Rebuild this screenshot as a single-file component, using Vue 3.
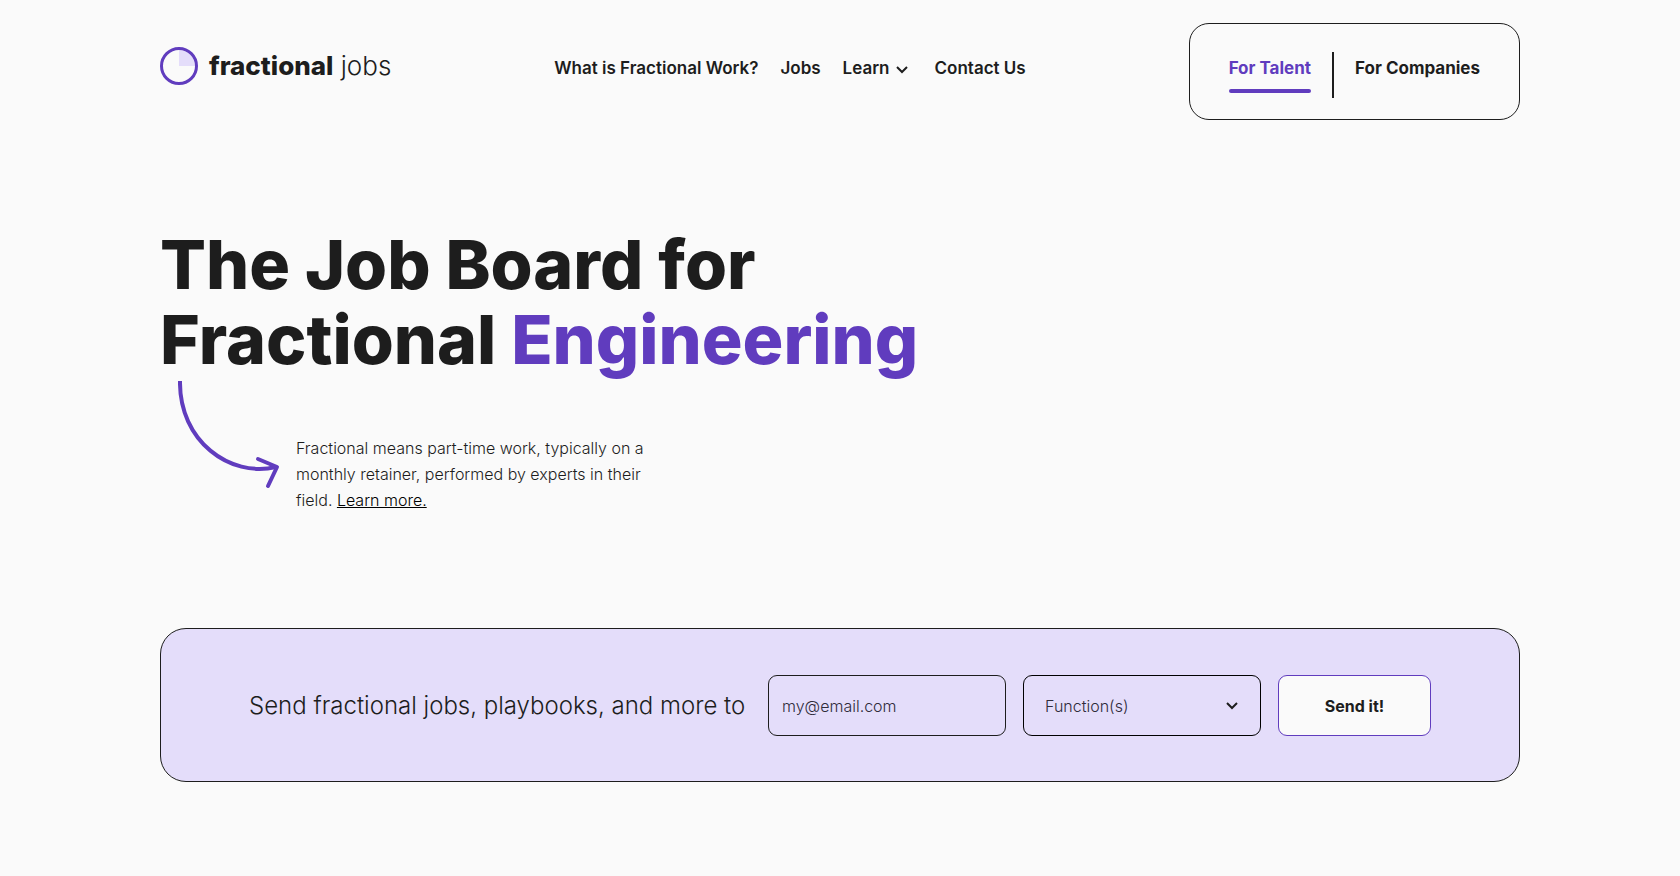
<script setup>
import { ref } from 'vue'

const navLinks = ['What is Fractional Work?', 'Jobs', 'Learn', 'Contact Us']
const functions = ['Engineering', 'Product', 'Design', 'Marketing', 'Finance']
const email = ref('')
const selectedFunction = ref('')
</script>

<template>
  <div class="page">
    <header class="header">
      <a class="logo" href="#">
        <svg class="logo-mark" viewBox="0 0 38 38" aria-hidden="true">
          <path d="M19 19V3a16 16 0 0 1 16 16z" fill="#e4ddfa" />
          <circle cx="19" cy="19" r="17.5" fill="none" stroke="#603cbe" stroke-width="3" />
        </svg>
        <span class="logo-text"><strong>fractional</strong> jobs</span>
      </a>

      <nav class="nav" aria-label="Main">
        <template v-for="item in navLinks" :key="item">
          <button v-if="item === 'Learn'" class="nav-item nav-menu" type="button">
            Learn
            <svg class="chevron" viewBox="0 0 12 8" aria-hidden="true">
              <path d="M1 1l5 5 5-5" />
            </svg>
          </button>
          <a v-else class="nav-item" href="#">{{ item }}</a>
        </template>
      </nav>

      <div class="audience">
        <a class="audience-link active" href="#">For Talent</a>
        <span class="divider"></span>
        <a class="audience-link" href="#">For Companies</a>
      </div>
    </header>

    <main>
      <section class="hero">
        <h1>The Job Board for<br />Fractional <span class="accent">Engineering</span></h1>
        <div class="explain">
          <svg class="arrow" viewBox="0 0 102 108" aria-hidden="true">
            <path d="M2 0C1 60 52 97 98 86" />
            <path class="head" d="M80 78l19 8-9 19" />
          </svg>
          <p>
            Fractional means part-time work, typically on a monthly retainer, performed by experts
            in their field. <a href="#">Learn more.</a>
          </p>
        </div>
      </section>

      <form class="signup" @submit.prevent>
        <label class="signup-label" for="email">Send fractional jobs, playbooks, and more to</label>
        <input id="email" v-model="email" class="field" type="email" placeholder="my@email.com" />
        <div class="select-wrap">
          <select v-model="selectedFunction" class="field select" aria-label="Function(s)">
            <option value="">Function(s)</option>
            <option v-for="name in functions" :key="name" :value="name">{{ name }}</option>
          </select>
          <svg class="chevron select-chevron" viewBox="0 0 12 8" aria-hidden="true">
            <path d="M1 1l5 5 5-5" />
          </svg>
        </div>
        <button class="submit" type="submit">Send it!</button>
      </form>
    </main>
  </div>
</template>

<style>
body {
  margin: 0;
  background: #fafafa;
}
</style>

<style scoped>
.page {
  box-sizing: border-box;
  max-width: 1400px;
  margin: 0 auto;
  padding: 23px 20px 48px;
  font-family: Inter, "Liberation Sans", sans-serif;
  font-size: 16px;
  color: #1d1d1d;
}

.page a {
  color: inherit;
  text-decoration: none;
}

.header {
  display: flex;
  align-items: center;
  justify-content: space-between;
}

.logo {
  display: flex;
  align-items: center;
  gap: 11px;
  padding-bottom: 11px;
}

.logo-mark {
  width: 38px;
  height: 38px;
}

.logo-text {
  font-size: 26px;
  font-weight: 300;
  line-height: 38px;
}

.logo-text strong {
  font-weight: 800;
}

.nav {
  display: flex;
  align-items: center;
  gap: 22px;
  padding-bottom: 7px;
}

.nav-item {
  font-size: 17px;
  font-weight: 600;
  line-height: 24px;
}

.nav-menu {
  display: flex;
  align-items: center;
  gap: 6px;
  padding: 0 5px 0 0;
  border: 0;
  background: none;
  color: inherit;
  font-family: inherit;
}

.chevron {
  width: 12px;
  height: 8px;
  fill: none;
  stroke: #1d1d1d;
  stroke-width: 2;
}

.nav-menu .chevron {
  padding-top: 3px;
}

.audience {
  display: flex;
  align-items: flex-start;
  gap: 21px;
  padding: 28px 39px 21px;
  border: 1px solid #1d1d1d;
  border-radius: 20px;
}

.audience-link {
  padding: 4px 0 13px;
  font-size: 17px;
  font-weight: 700;
  line-height: 24px;
}

.page .audience-link.active {
  position: relative;
  color: #603cbe;
}

.audience-link.active::after {
  content: "";
  position: absolute;
  right: 0;
  bottom: 0;
  left: 0;
  height: 4px;
  border-radius: 2px;
  background: #603cbe;
}

.divider {
  width: 2px;
  height: 46px;
  background: #1d1d1d;
}

.hero {
  padding-top: 107px;
}

h1 {
  margin: 0;
  font-size: 68px;
  font-weight: 800;
  line-height: 75px;
}

.accent {
  color: #603cbe;
}

.explain {
  display: flex;
  gap: 16px;
  padding: 4px 0 0 18px;
}

.arrow {
  flex: none;
  width: 102px;
  height: 108px;
  fill: none;
  stroke: #603cbe;
  stroke-width: 4;
}

.arrow .head {
  stroke-linecap: round;
  stroke-linejoin: round;
}

.explain p {
  max-width: 364px;
  margin: 54px 0 0;
  font-size: 16px;
  font-weight: 300;
  line-height: 26px;
}

.page .explain a {
  color: #000;
  text-decoration: underline;
}

.signup {
  display: flex;
  align-items: center;
  justify-content: center;
  gap: 17px;
  margin-top: 115px;
  padding: 46px 24px 45px;
  border: 1px solid #1d1d1d;
  border-radius: 26px;
  background: #e4ddfa;
}

.signup-label {
  flex: 0 1 502px;
  font-size: 24px;
  font-weight: 300;
  line-height: 36px;
}

.field {
  box-sizing: border-box;
  width: 238px;
  height: 61px;
  padding: 0 13px;
  border: 1px solid #1d1d1d;
  border-radius: 9px;
  background: transparent;
  color: #2f2b3a;
  font-family: inherit;
  font-size: 16px;
  font-weight: 300;
}

.field::placeholder {
  color: #2f2b3a;
  opacity: 1;
}

.select-wrap {
  position: relative;
}

.select {
  display: block;
  padding: 0 40px 0 21px;
  border-color: #000;
  appearance: none;
}

.select-chevron {
  position: absolute;
  top: 27px;
  right: 23px;
  pointer-events: none;
}

.submit {
  width: 153px;
  height: 61px;
  border: 1px solid #603cbe;
  border-radius: 9px;
  background: #fafafa;
  color: #1d1d1d;
  font-family: inherit;
  font-size: 16px;
  font-weight: 700;
}
</style>
